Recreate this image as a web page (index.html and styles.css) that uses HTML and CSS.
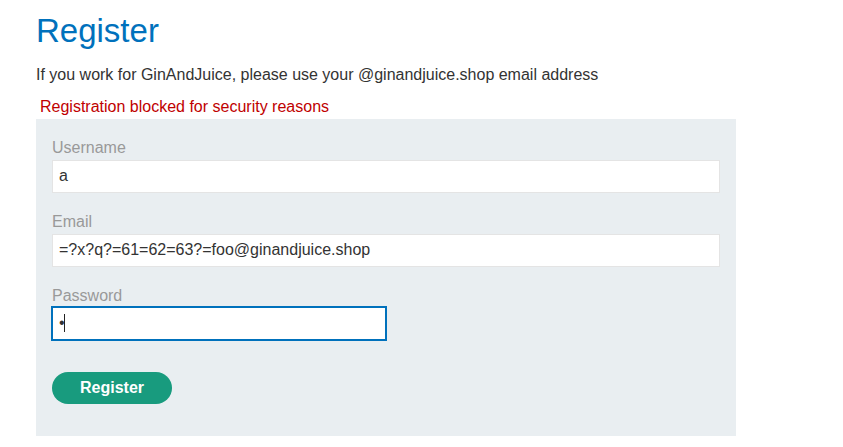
FILE: index.html
```html
<!DOCTYPE html>
<html lang="en">
<head>
<meta charset="utf-8">
<title>Register</title>
<link rel="stylesheet" href="styles.css">
</head>
<body>
<div class="container">
  <h1 class="title">Register</h1>
  <p class="intro">If you work for GinAndJuice, please use your @ginandjuice.shop email address</p>
  <p class="warning">Registration blocked for security reasons</p>
  <form class="login-form" onsubmit="return false">
    <label class="field-label" for="username">Username</label>
    <input class="field" id="username" type="text" value="a" readonly>
    <label class="field-label" for="email">Email</label>
    <input class="field" id="email" type="text" value="=?x?q?=61=62=63?=foo@ginandjuice.shop" readonly>
    <label class="field-label" for="password">Password</label>
    <div class="field-wrap">
      <input class="field field-half is-focused" id="password" type="password" value="a" readonly>
      <span class="caret"></span>
    </div>
    <button class="button" type="submit">Register</button>
  </form>
</div>
</body>
</html>
```

FILE: styles.css
```css
html, body {
  margin: 0;
  padding: 0;
  background: #ffffff;
}

body {
  font-family: "Liberation Sans", Arial, Helvetica, sans-serif;
  font-size: 16px;
  color: #333333;
}

.container {
  width: 700px;
  padding-left: 36px;
}

.title {
  margin: 12px 0 0;
  font-size: 33px;
  font-weight: normal;
  line-height: 38px;
  color: #0071bc;
}

.intro {
  margin: 16px 0 0;
  line-height: 18px;
}

.warning {
  margin: 14px 0 0;
  padding-left: 4px;
  line-height: 18px;
  color: #c00000;
}

.login-form {
  display: flex;
  flex-direction: column;
  align-items: flex-start;
  margin-top: 3px;
  padding: 20px 16px 32px;
  background: #e9eef1;
}

.field-label {
  display: block;
  line-height: 18px;
  color: #999999;
  margin-bottom: 3px;
}

.field {
  box-sizing: border-box;
  display: block;
  width: 100%;
  height: 33px;
  margin: 0 0 20px;
  padding: 0 6px 1px;
  border: 1px solid #e4e4e4;
  background: #ffffff;
  font-family: "Liberation Sans", Arial, Helvetica, sans-serif;
  font-size: 16px;
  color: #333333;
  outline: none;
}

.field-wrap {
  position: relative;
  width: 50%;
  margin-top: -1px;
}

.field-half {
  width: 100%;
  margin-bottom: 32px;
}

.is-focused {
  border-color: #0071bc;
  box-shadow: 0 0 0 1px #0071bc;
}

.caret {
  position: absolute;
  left: 12px;
  top: 7px;
  width: 1px;
  height: 18px;
  background: #222222;
}

.button {
  width: 120px;
  height: 32px;
  border: 0;
  border-radius: 16px;
  background: #189b7e;
  color: #ffffff;
  font-family: "Liberation Sans", Arial, Helvetica, sans-serif;
  font-size: 16px;
  font-weight: bold;
  cursor: pointer;
}
```
